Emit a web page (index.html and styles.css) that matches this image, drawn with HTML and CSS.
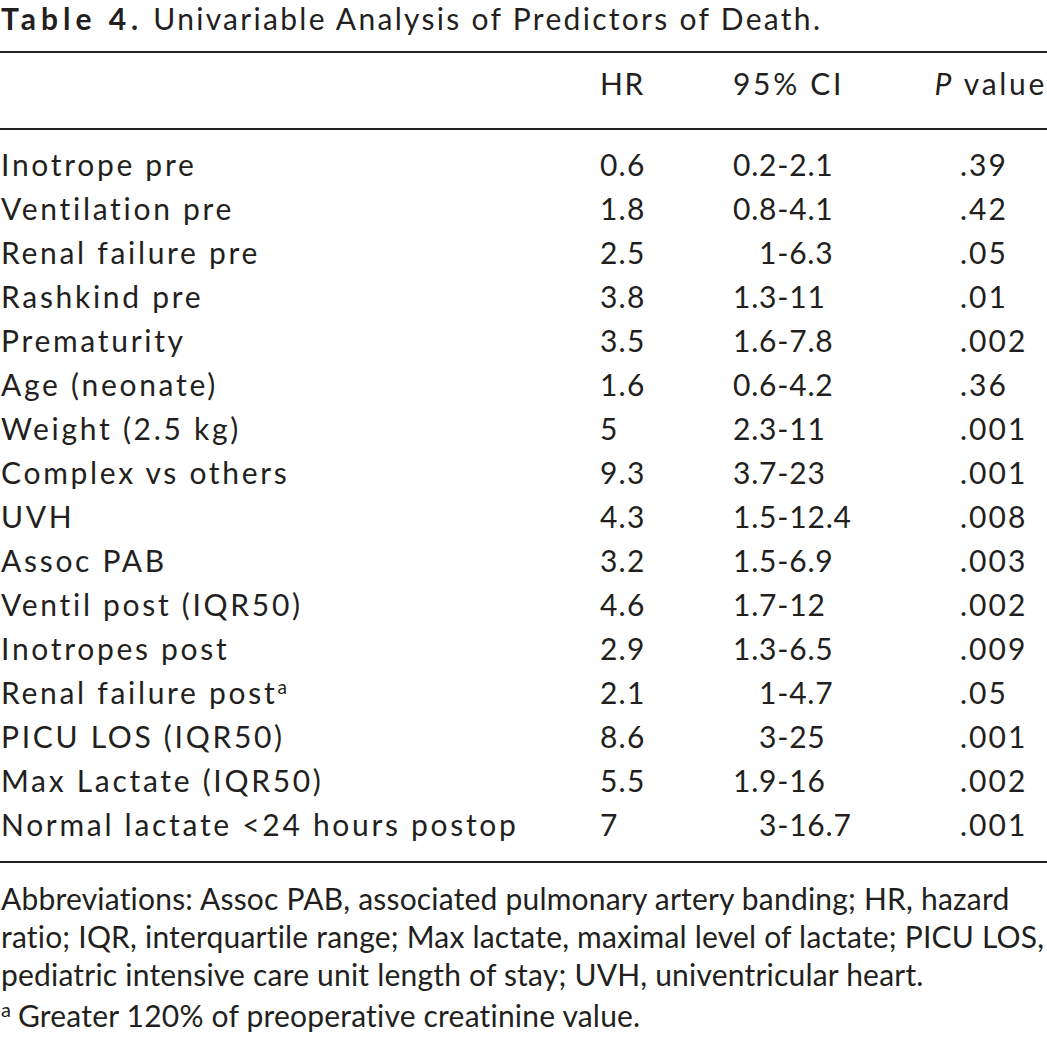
FILE: index.html
```html
<!DOCTYPE html>
<html lang="en">
<head>
<meta charset="utf-8">
<title>Table 4</title>
<link rel="stylesheet" href="styles.css">
</head>
<body>
<h1 class="title"><b>Table 4.</b> Univariable Analysis of Predictors of Death.</h1>
<table class="tbl">
  <colgroup>
    <col class="c-name"><col class="c-hr"><col class="c-ci"><col class="c-p">
  </colgroup>
  <thead>
    <tr><th></th><th class="num">HR</th><th>95% CI</th><th class="ph"><i>P</i> value</th></tr>
  </thead>
  <tbody>
    <tr><td>Inotrope pre</td><td>0.6</td><td>0.2-2.1</td><td>.39</td></tr>
    <tr><td>Ventilation pre</td><td>1.8</td><td>0.8-4.1</td><td>.42</td></tr>
    <tr><td>Renal failure pre</td><td>2.5</td><td class="ind">1-6.3</td><td>.05</td></tr>
    <tr><td>Rashkind pre</td><td>3.8</td><td>1.3-11</td><td>.01</td></tr>
    <tr><td>Prematurity</td><td>3.5</td><td>1.6-7.8</td><td>.002</td></tr>
    <tr><td>Age (neonate)</td><td>1.6</td><td>0.6-4.2</td><td>.36</td></tr>
    <tr><td>Weight (2.5 kg)</td><td>5</td><td>2.3-11</td><td>.001</td></tr>
    <tr><td>Complex vs others</td><td>9.3</td><td>3.7-23</td><td>.001</td></tr>
    <tr><td>UVH</td><td>4.3</td><td>1.5-12.4</td><td>.008</td></tr>
    <tr><td>Assoc PAB</td><td>3.2</td><td>1.5-6.9</td><td>.003</td></tr>
    <tr><td>Ventil post (IQR50)</td><td>4.6</td><td>1.7-12</td><td>.002</td></tr>
    <tr><td>Inotropes post</td><td>2.9</td><td>1.3-6.5</td><td>.009</td></tr>
    <tr><td>Renal failure post<sup class="sa">a</sup></td><td>2.1</td><td class="ind">1-4.7</td><td>.05</td></tr>
    <tr><td>PICU LOS (IQR50)</td><td>8.6</td><td class="ind">3-25</td><td>.001</td></tr>
    <tr><td>Max Lactate (IQR50)</td><td>5.5</td><td>1.9-16</td><td>.002</td></tr>
    <tr><td>Normal lactate &lt;24 hours postop</td><td>7</td><td class="ind">3-16.7</td><td>.001</td></tr>
  </tbody>
</table>
<div class="notes">
  <p class="abbr">Abbreviations: Assoc PAB, associated pulmonary artery banding; HR, hazard<br>ratio; IQR, interquartile range; Max lactate, maximal level of lactate; PICU LOS,<br>pediatric intensive care unit length of stay; UVH, univentricular heart.</p>
  <p class="fn"><sup class="sa fa">a</sup>Greater 120% of preoperative creatinine value.</p>
</div>
</body>
</html>
```

FILE: styles.css
```css
html, body {
  margin: 0;
  padding: 0;
  background: #ffffff;
}
body {
  color: #231f20;
  font-family: Lato, "Open Sans", sans-serif;
  font-size: 30px;
  width: 1047px;
}
.title {
  margin: 0 0 15px 0;
  padding-left: 1px;
  font-size: 30px;
  font-weight: 400;
  line-height: 36px;
  letter-spacing: 2.3px;
  white-space: nowrap;
}
.title b {
  font-weight: 700;
  letter-spacing: 5px;
}
.tbl {
  width: 1047px;
  table-layout: fixed;
  border-collapse: separate;
  border-spacing: 0;
  letter-spacing: 2.7px;
}
.c-name { width: 600px; }
.c-hr { width: 133px; }
.c-ci { width: 194px; }
.c-p { width: 120px; }
.tbl th,
.tbl td {
  padding: 0;
  text-align: left;
  font-weight: 400;
  line-height: 44px;
  white-space: nowrap;
  vertical-align: baseline;
}
.tbl td:first-child {
  padding-left: 1px;
}
.tbl td:nth-child(2) {
  letter-spacing: 1.2px;
}
.tbl td:nth-child(3) {
  letter-spacing: 0.8px;
}
.tbl td:last-child {
  padding-left: 33px;
  letter-spacing: 2px;
}
.tbl th {
  border-top: 2px solid #231f20;
  border-bottom: 2px solid #231f20;
  padding-top: 8px;
  padding-bottom: 23px;
}
.tbl th.num {
  letter-spacing: 1.5px;
}
.tbl th.ph {
  text-align: right;
  letter-spacing: 2.7px;
}
.tbl tbody tr:first-child td {
  padding-top: 12px;
}
.tbl tbody tr:last-child td {
  padding-bottom: 15px;
  border-bottom: 2px solid #231f20;
}
.tbl td.ind {
  padding-left: 26px;
}
.sa {
  font-size: 19px;
  line-height: 0;
  vertical-align: 10px;
  letter-spacing: 0;
}
.notes {
  margin-top: 16px;
  padding-left: 1px;
  letter-spacing: 0.2px;
}
.notes p {
  margin: 0;
  line-height: 38px;
  white-space: nowrap;
}
.notes .fn {
  margin-top: 3px;
}
.fa {
  font-size: 20px;
  margin-right: 7px;
}
```
